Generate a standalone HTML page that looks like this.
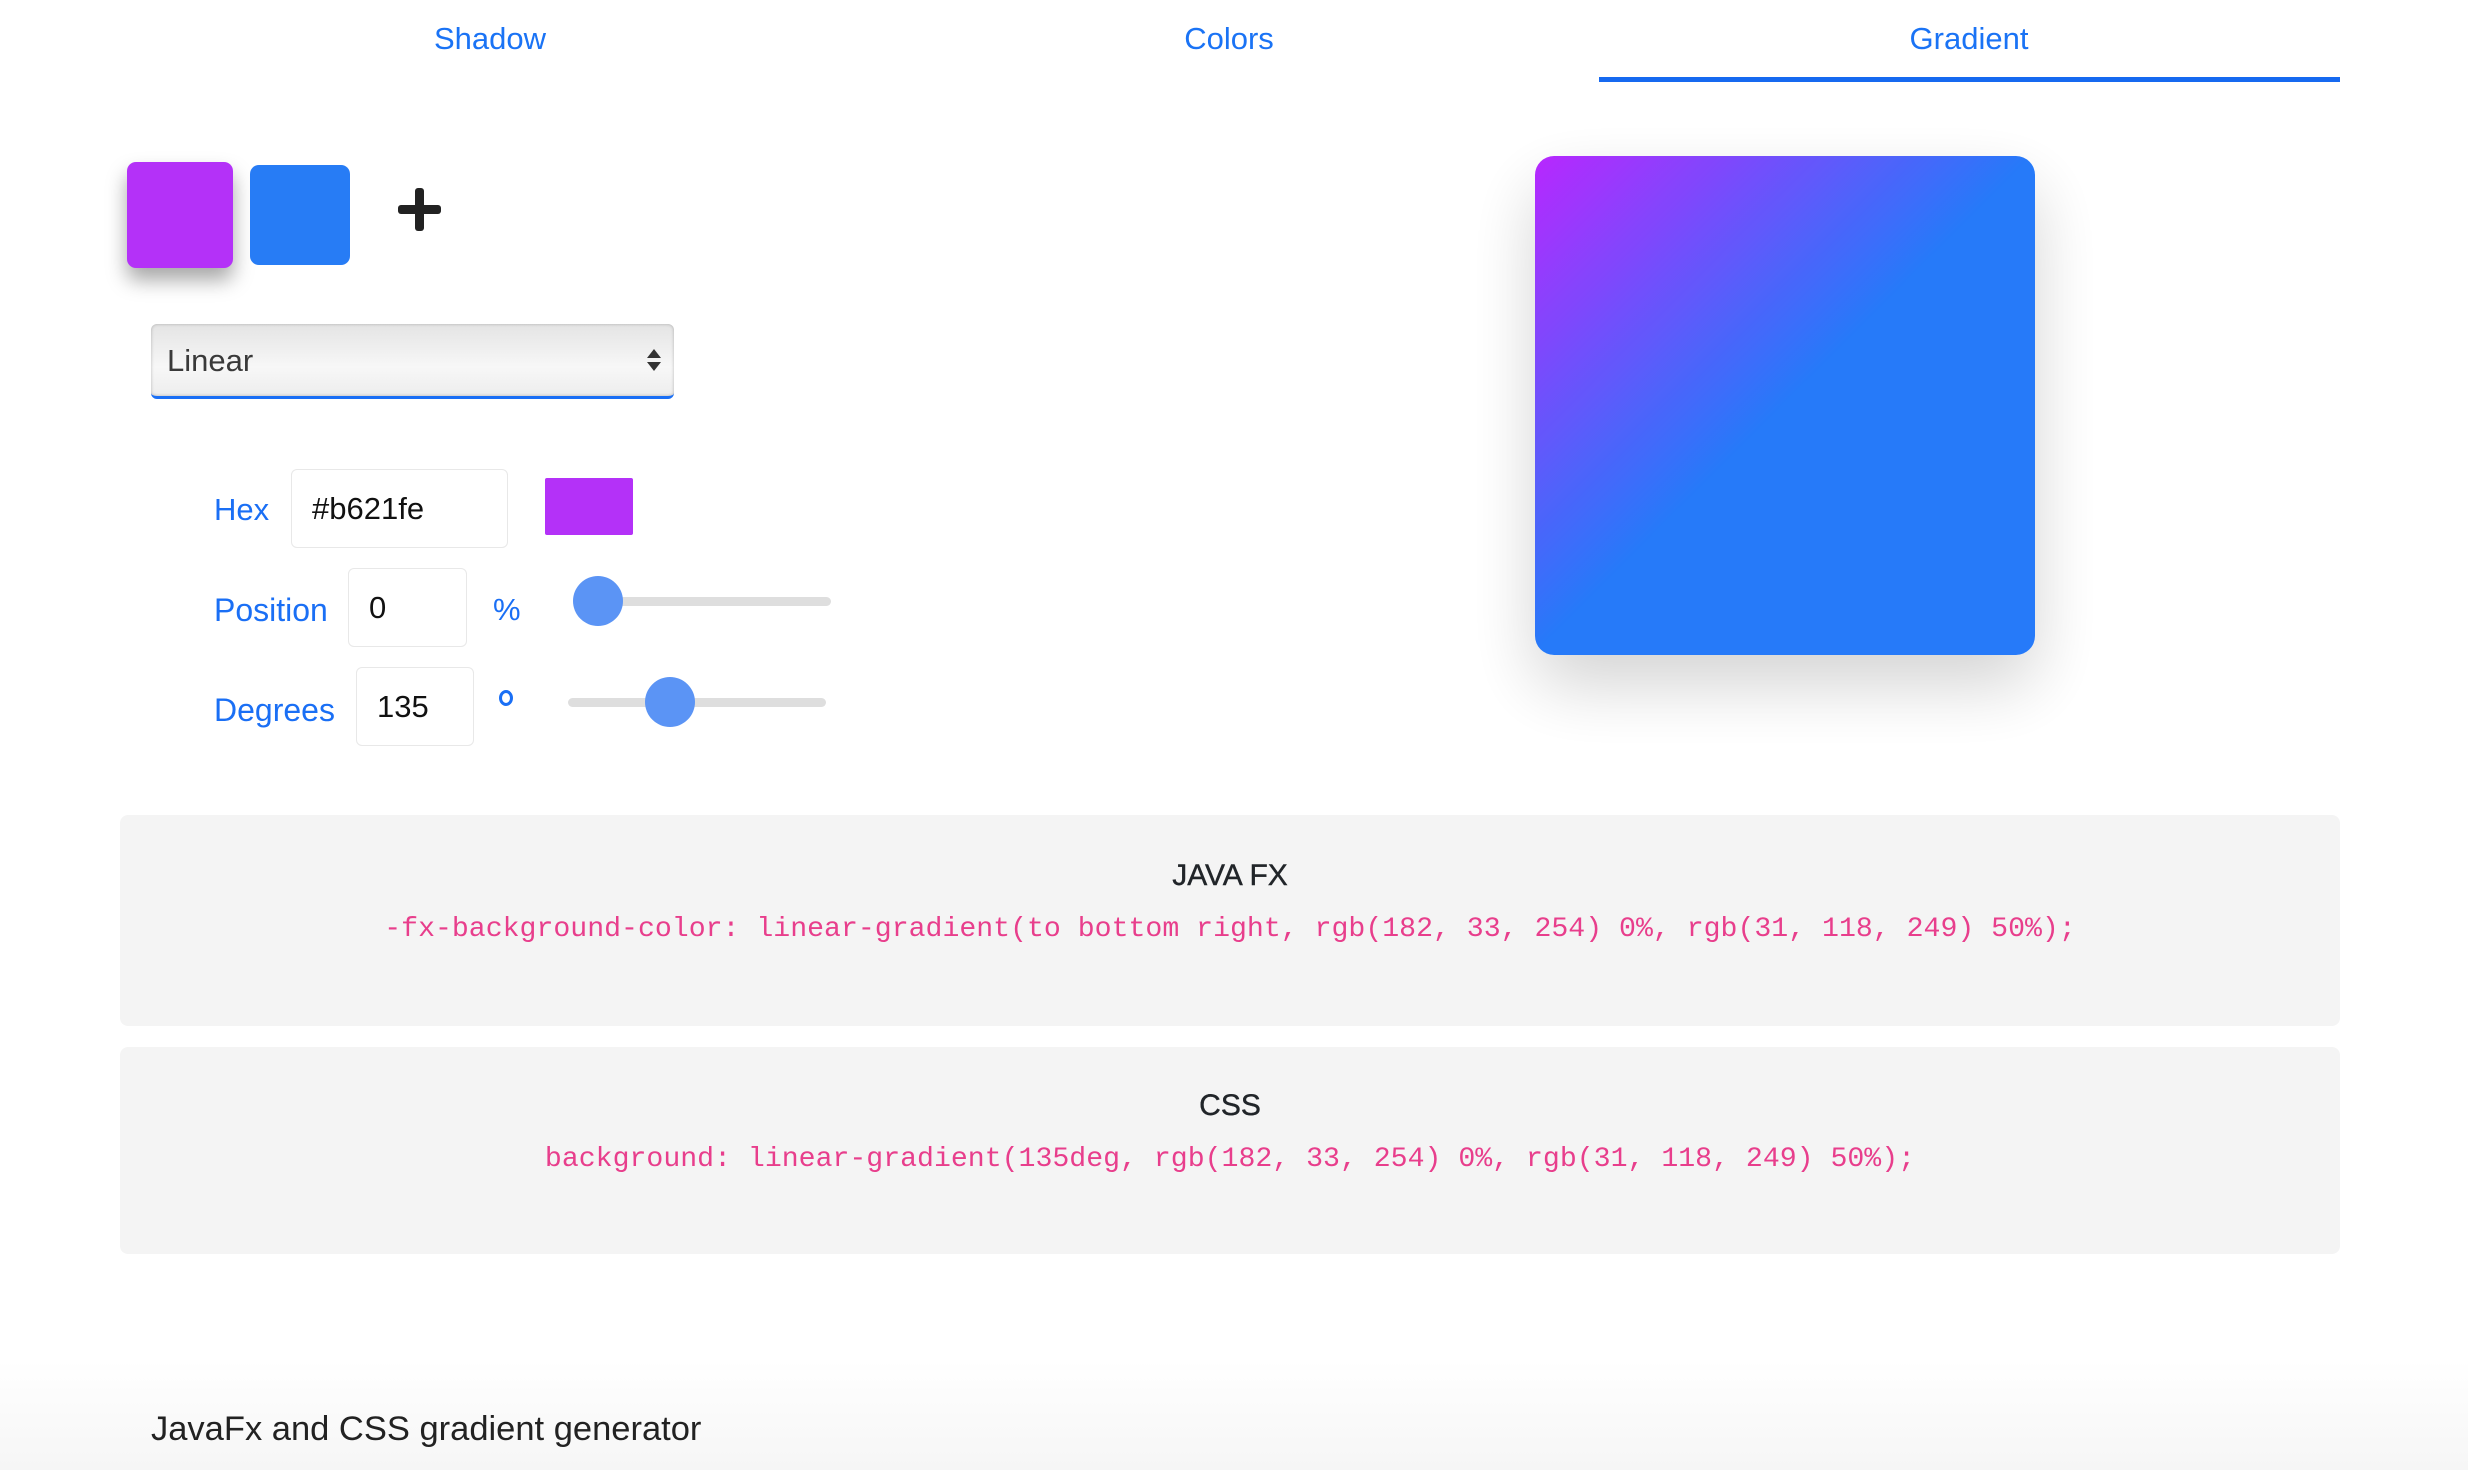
<!DOCTYPE html>
<html><head><meta charset="utf-8"><style>
*{box-sizing:border-box;margin:0;padding:0}
body{width:2468px;height:1470px;background:#fff;font-family:"Liberation Sans",sans-serif;position:relative;overflow:hidden;color:#212529}
.a{position:absolute}
.tab{position:absolute;top:21px;font-size:31px;color:#1a73f5;transform:translateX(-50%)}
.lbl{position:absolute;font-size:31px;color:#1a6ff5;line-height:1}
.inp{position:absolute;border:1px solid #e8e8e8;border-radius:6px;background:#fff;font-size:31px;color:#111;padding-left:20px;display:flex;align-items:center}
.track{position:absolute;height:9px;background:#dedede;border-radius:5px}
.thumb{position:absolute;width:50px;height:50px;border-radius:50%;background:#5b94f5}
.panel{position:absolute;left:120px;width:2220px;background:#f4f4f4;border-radius:8px;text-align:center}
.panel h3{font-size:30px;font-weight:normal;color:#212529;position:absolute;left:0;right:0;-webkit-text-stroke:0.4px #212529}
.panel code{font-family:"Liberation Mono",monospace;font-size:28.2px;color:#e83e8c;position:absolute;left:0;right:0}
</style></head><body>
<div class="tab" style="left:490px">Shadow</div>
<div class="tab" style="left:1229px">Colors</div>
<div class="tab" style="left:1969px">Gradient</div>
<div class="a" style="left:1599px;top:77px;width:741px;height:5px;background:#1669f0"></div>

<div class="a" style="left:127px;top:162px;width:106px;height:106px;background:#b431f8;border-radius:9px;box-shadow:0 12px 20px rgba(0,0,0,.35)"></div>
<div class="a" style="left:250px;top:165px;width:100px;height:100px;background:#277cf5;border-radius:9px"></div>
<div class="a" style="left:398px;top:205px;width:43px;height:9px;background:#222;border-radius:3px"></div>
<div class="a" style="left:415px;top:188px;width:9px;height:43px;background:#222;border-radius:3px"></div>

<div class="a" style="left:151px;top:324px;width:523px;height:75px;border-radius:6px;background:linear-gradient(#e4e4e4,#f7f7f7 60%,#ededed);border-bottom:3px solid #1a6ff5;box-shadow:inset 0 0 3px rgba(0,0,0,.25)"></div>
<div class="a" style="left:167px;top:343px;font-size:31px;color:#3a3a3a">Linear</div>
<div class="a" style="left:647px;top:349px;width:0;height:0;border-left:7px solid transparent;border-right:7px solid transparent;border-bottom:9px solid #333"></div>
<div class="a" style="left:647px;top:362px;width:0;height:0;border-left:7px solid transparent;border-right:7px solid transparent;border-top:9px solid #333"></div>

<div class="lbl" style="left:214px;top:494px">Hex</div>
<div class="inp" style="left:291px;top:469px;width:217px;height:79px">#b621fe</div>
<div class="a" style="left:545px;top:478px;width:88px;height:57px;background:#b431f8;border-radius:2px"></div>

<div class="lbl" style="left:214px;top:594px;font-size:32px">Position</div>
<div class="inp" style="left:348px;top:568px;width:119px;height:79px">0</div>
<div class="lbl" style="left:493px;top:594px">%</div>
<div class="track" style="left:575px;top:597px;width:256px"></div>
<div class="thumb" style="left:573px;top:576px"></div>

<div class="lbl" style="left:214px;top:694px;font-size:32px">Degrees</div>
<div class="inp" style="left:356px;top:667px;width:118px;height:79px">135</div>
<div class="a" style="left:499px;top:690px;width:14px;height:16px;border:3px solid #1a6ff5;border-radius:50%"></div>
<div class="track" style="left:568px;top:698px;width:258px"></div>
<div class="thumb" style="left:645px;top:677px"></div>

<div class="a" style="left:1535px;top:156px;width:500px;height:499px;border-radius:19px;background:linear-gradient(135deg,#b621fe 0%,#1f76f9 50%);opacity:.97;box-shadow:0 30px 70px rgba(0,0,0,.18)"></div>

<div class="panel" style="top:815px;height:211px"><h3 style="top:44px">JAVA FX</h3><code style="top:99px">-fx-background-color: linear-gradient(to bottom right, rgb(182, 33, 254) 0%, rgb(31, 118, 249) 50%);</code></div>
<div class="panel" style="top:1047px;height:207px"><h3 style="top:42px">CSS</h3><code style="top:97px">background: linear-gradient(135deg, rgb(182, 33, 254) 0%, rgb(31, 118, 249) 50%);</code></div>

<div class="a" style="left:0;top:1360px;width:2468px;height:110px;background:linear-gradient(#fff,#f6f6f6)"></div>
<div class="a" style="left:151px;top:1410px;font-size:34.5px;color:#222">JavaFx and CSS gradient generator</div>
</body></html>
